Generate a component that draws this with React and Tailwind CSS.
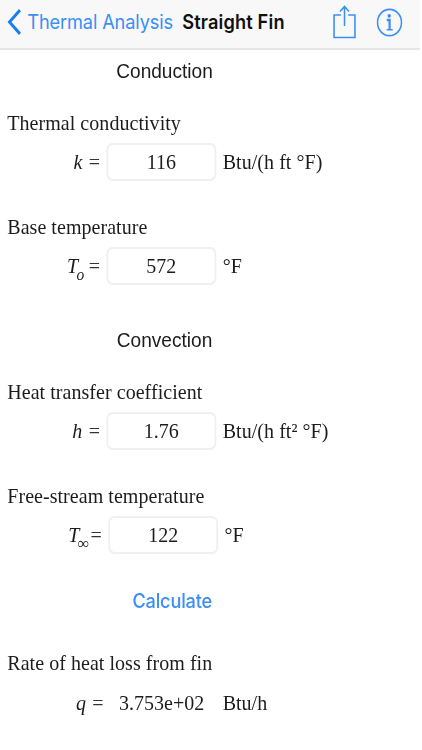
import clsx from 'clsx';

const conduction = [
  { label: 'Thermal conductivity', symbol: 'k', value: '116', unit: 'Btu/(h ft °F)' },
  { label: 'Base temperature', symbol: 'T', sub: 'o', value: '572', unit: '°F' },
];

const convection = [
  { label: 'Heat transfer coefficient', symbol: 'h', value: '1.76', unit: 'Btu/(h ft² °F)' },
  { label: 'Free-stream temperature', symbol: 'T', sub: '∞', value: '122', unit: '°F', shifted: true },
];

function Symbol({ symbol, sub }) {
  return (
    <span className="flex leading-[26px]">
      <i>{symbol}</i>
      {sub && (
        <i className={clsx('relative top-[14px] -ml-px h-[16px] leading-[16px]', sub === 'o' ? '-left-px mr-[4px] text-[17px]' : 'mr-px -left-px text-[17px]')}>
          {sub}
        </i>
      )}
      <span className={clsx('text-[#333]', !sub && 'ml-[7px]')}>=</span>
    </span>
  );
}

function Field({ label, symbol, sub, value, unit, shifted }) {
  return (
    <div className="h-[104px]">
      <div className="h-[33px] pl-[8px] leading-[26px] tracking-[0.05px]">{label}</div>
      <div className="flex h-[37px] items-center">
        <div className={clsx('flex shrink-0 justify-end', shifted ? 'w-[112px]' : 'w-[110px]')}>
          <Symbol symbol={symbol} sub={sub} />
        </div>
        <input
          className="ml-[7px] h-[38px] w-[121px] rounded-[7px] border-2 border-[#f0f0f0] bg-white text-center outline-none"
          defaultValue={value}
        />
        <span className="ml-[7px] whitespace-nowrap tracking-[0.05px]">{unit}</span>
      </div>
    </div>
  );
}

function SectionTitle({ children }) {
  return (
    <h2 className="w-[362px] text-center font-['Liberation_Sans',sans-serif] text-[21px] leading-[26px]">
      {children}
    </h2>
  );
}

export default function App() {
  return (
    <div className="h-[750px] w-[422px] overflow-hidden bg-white">
      {/* condensed type: laid out at 462 wide, squeezed horizontally */}
      <div className="w-[462px] origin-top-left scale-x-[0.909] font-['Liberation_Serif',serif] text-[22px] text-[#1c1c1c]">
        <nav className="flex h-[50px] items-center border-b-2 border-[#e6e6e6] bg-[#f8f8f8] pb-[4px] pl-[8px] font-['Inter',sans-serif] text-[20px]">
          <svg className="h-[26px] w-[15px]" viewBox="0 0 15 26" fill="none" stroke="#1a7df5" strokeWidth="3.2">
            <path d="M14 1.2 2.5 13 14 24.8" />
          </svg>
          <span className="ml-[7px] whitespace-nowrap tracking-[-0.13px] text-[#3a8ef6]">Thermal Analysis</span>
          <span className="ml-[10px] whitespace-nowrap font-semibold tracking-[0.18px] text-[#111]">Straight Fin</span>
          <svg className="ml-auto h-[34px] w-[26px]" viewBox="0 0 26 34" fill="none" stroke="#3a8ef6" strokeWidth="1.7">
            <path d="M9 10H1.5V32.5H24.5V10H17M13 21V1.5M8 6.5 13 1.5 18 6.5" />
          </svg>
          <svg className="mr-[19px] ml-[22px] h-[29px] w-[29px]" viewBox="0 0 29 29" fill="none" stroke="#3a8ef6" strokeWidth="1.7">
            <circle cx="14.5" cy="14.5" r="13.2" />
            <circle cx="14.2" cy="7.8" r="1.9" fill="#3a8ef6" stroke="none" />
            <path d="M11.5 12H14.6V21.5" strokeWidth="2.4" />
            <path d="M11.3 21.8H18" strokeWidth="1.5" />
          </svg>
        </nav>

        <div className="pt-[8px]">
          <SectionTitle>Conduction</SectionTitle>
        </div>
        <div className="mt-[26px]">
          {conduction.map((field) => (
            <Field key={field.label} {...field} />
          ))}
        </div>

        <div className="mt-[9px]">
          <SectionTitle>Convection</SectionTitle>
        </div>
        <div className="mt-[26px]">
          {convection.map((field) => (
            <Field key={field.label} {...field} />
          ))}
        </div>

        <div className="mt-px flex w-[379px] justify-center">
          <button className="font-['Inter',sans-serif] text-[20px] leading-[26px] font-medium tracking-[-0.2px] text-[#3a8ef6]">
            Calculate
          </button>
        </div>

        <div className="mt-[36px] pl-[8px] leading-[26px] tracking-[0.05px]">Rate of heat loss from fin</div>
        <div className="mt-[14px] flex items-center leading-[26px]">
          <div className="flex w-[114px] justify-end">
            <Symbol symbol="q" />
          </div>
          <span className="ml-[17px] w-[97px] whitespace-nowrap">3.753e+02</span>
          <span className="ml-[17px]">Btu/h</span>
        </div>
      </div>
    </div>
  );
}
